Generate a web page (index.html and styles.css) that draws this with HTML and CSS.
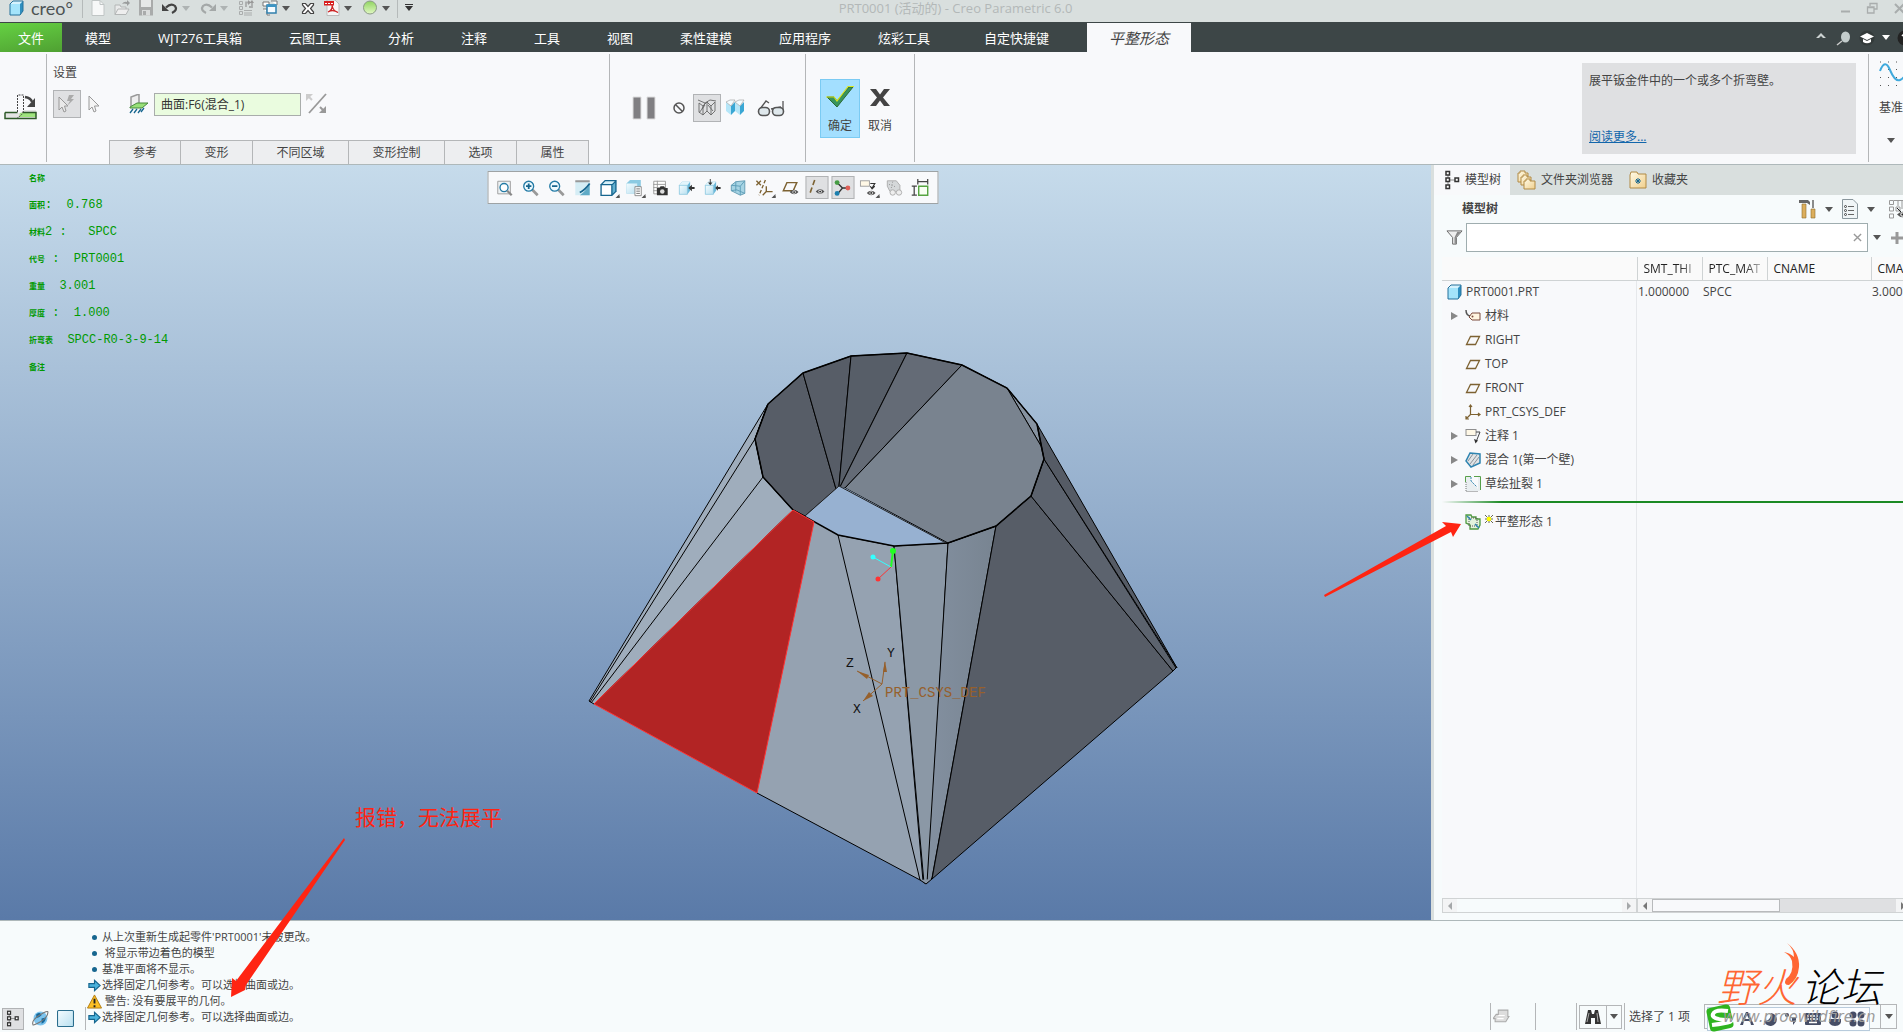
FILE: index.html
```
<!DOCTYPE html>
<html lang="zh-CN">
<head>
    <meta charset="UTF-8">
    <meta name="viewport" content="width=device-width, initial-scale=1.0">
    <title>PRT0001 (活动的) - Creo Parametric 6.0</title>
    <link rel="stylesheet" href="styles.css">
</head>
<body>
    <!-- shared icons -->
    <svg class="defs" width="0" height="0">
        <defs>
            <linearGradient id="gCube" x1="0" y1="0" x2="1" y2="1"><stop offset="0" stop-color="#f4fcff"/><stop offset="1" stop-color="#b9e0f0"/></linearGradient>
            <linearGradient id="gGreen" x1="0" y1="0" x2="0" y2="1"><stop offset="0" stop-color="#8fd45f"/><stop offset="1" stop-color="#e2f8c4"/></linearGradient>
            <linearGradient id="gGold" x1="0" y1="0" x2="1" y2="1"><stop offset="0" stop-color="#fffbe8"/><stop offset="1" stop-color="#f0cf8c"/></linearGradient>
        </defs>
        <symbol id="cube" viewBox="0 0 16 16">
            <path d="M2 4L5 1H15V11L12 15H2Z" fill="#2f8fc0"/><path d="M5 1H15L12 4H2Z" fill="#d5f2fd"/><path d="M2 4H12V15H2Z" fill="#a4e4fb"/><path d="M2 4L5 1H15V11L12 15H2Z" fill="none" stroke="#25719b"/>
        </symbol>
        <symbol id="cubelite" viewBox="0 0 20 20">
            <path d="M2 7L5 3H14V13L11 17H2Z" fill="#6db9da"/><path d="M5 3H14L11 7H2Z" fill="#e3f5fc"/><path d="M2 7H11V17H2Z" fill="url(#gCube)" stroke="#86c5de" stroke-width=".7"/>
        </symbol>
        <symbol id="eye" viewBox="0 0 10 6"><path d="M0 3Q5-2 10 3Q5 8 0 3Z" fill="#555"/><circle cx="5" cy="3" r="2" fill="#ddd"/><circle cx="5" cy="3" r="1" fill="#222"/></symbol>
        <symbol id="plane" viewBox="0 0 16 16"><path d="M5.500 4.500H14.500L10.500 12.500H1.500Z" fill="none" stroke="#7d6232" stroke-width="1.300"/></symbol>
        <symbol id="treeicon" viewBox="0 0 16 20">
            <path d="M3 5V15M5 10H11" stroke="#888" fill="none"/><g fill="#fff" stroke="#333" stroke-width="1.500"><rect x="1" y="1.500" width="3.500" height="3.500"/><rect x="1" y="8" width="3.500" height="3.500"/><rect x="1" y="15" width="3.500" height="3.500"/><rect x="10" y="8" width="3.500" height="3.500"/></g>
        </symbol>
        <symbol id="arrowmsg" viewBox="0 0 16 14"><path d="M2 5H8V1.500L14 7L8 12.500V9H2Z" fill="#4bb3dc" stroke="#17668f" stroke-width="1.200"/></symbol>
        <symbol id="note" viewBox="0 0 16 16"><rect x="1" y="1.500" width="10" height="6" fill="#fff8e6" stroke="#8f8f8f"/><path d="M11 4H15L11 14" fill="none" stroke="#444"/><path d="M9 11L10.500 15.500L13 12.500Z" fill="#333"/></symbol>
    </svg>

    <header class="titlebar">
        <svg class="applogo" viewBox="0 0 16 16"><use href="#cube"/></svg>
        <span class="brand">creo°</span>
        <div class="quick">
            <button aria-label="新建"><svg viewBox="0 0 16 16"><path d="M2 .500H10L14 4.500V15.500H2Z" fill="#f7f8f8" stroke="#c0c5c5"/><path d="M10 .500V4.500H14" fill="none" stroke="#c0c5c5"/></svg></button>
            <button aria-label="打开"><svg viewBox="0 0 16 16"><path d="M1 14.500V5H6L7 7H12V9" fill="#e9eaea" stroke="#b3b6b6"/><path d="M1 14.500L4 9H15L12 14.500Z" fill="#eee" stroke="#b3b6b6"/><path d="M8 4Q10 1 13 2V0L16 3L13 6V4Q10 3 8 4Z" fill="#9a9d9d"/></svg></button>
            <button aria-label="保存"><svg viewBox="0 0 16 16"><path d="M1 0H15V15.500H1Z" fill="#a9abab"/><path d="M3 0H13V7H3Z" fill="#e6e8e8"/><path d="M4 10H12V15.500H4Z" fill="#dadcdc"/><path d="M5 11H8V15H5Z" fill="#a9abab"/></svg></button>
            <button aria-label="撤消"><svg viewBox="0 0 16 16"><path d="M4 7.500Q9 2.500 13 6Q16 10 10 13" fill="none" stroke="#444" stroke-width="2.200"/><path d="M0 4V11H7Z" fill="#444"/></svg></button>
            <button class="drop" aria-label="撤消列表"><span class="caret pale"></span></button>
            <button aria-label="重做"><svg viewBox="0 0 16 16"><path d="M12 7.500Q7 2.500 3 6Q0 10 6 13" fill="none" stroke="#a4a8a8" stroke-width="2.200"/><path d="M16 4V11H9Z" fill="#a4a8a8"/></svg></button>
            <button class="drop" aria-label="重做列表"><span class="caret pale"></span></button>
            <button aria-label="重新生成"><svg viewBox="0 0 16 16"><g fill="none" stroke="#aaadad"><path d="M1.500 1.500H4.500V4.500H1.500ZM1.500 6.500H4.500V9.500H1.500ZM1.500 11.500H4.500V14.500H1.500ZM6 10.500H14M6 13H14M6 15H14"/><path d="M8 7V2.500H11M11 7H14V2" stroke-width="1.800"/></g><path d="M10 0L13 2.500L10 5ZM11.500 3L14 0L16 3Z" fill="#999"/></svg></button>
            <button aria-label="窗口"><svg viewBox="0 0 16 16"><path d="M1 2H7V6H1ZM9 1H15V5M1 9H5V15H8" fill="#fff" stroke="#777"/><rect x="5" y="5" width="9" height="8" fill="#f5fbff" stroke="#3180ad" stroke-width="1.500"/><path d="M5 4.500H14V7H5Z" fill="#3d95c4"/></svg></button>
            <button class="drop" aria-label="窗口列表"><span class="caret"></span></button>
            <button aria-label="关闭"><svg viewBox="0 0 16 16"><path d="M2.500 3.500H5.500L8 6.500L10.500 3.500H13.500V5L10.500 8.500L13.500 12V13.500H10.500L8 10.500L5.500 13.500H2.500V12L5.500 8.500L2.500 5Z" fill="#fff" stroke="#444" stroke-width="1.200"/></svg></button>
            <button aria-label="导出 PDF"><svg viewBox="0 0 16 16"><path d="M3 0H11L15 4V15.500H3Z" fill="#f6f6f6" stroke="#bbb"/><path d="M0 1H10V5.500H0Z" fill="#d82020"/><path d="M1 3.500H9" stroke="#fff" stroke-dasharray="2 1"/><path d="M4 12Q9 10 8 5Q9 11 14 12.500Q9 9 4 12Z" fill="none" stroke="#c22" stroke-width="1.200"/></svg></button>
            <button class="drop" aria-label="导出列表"><span class="caret"></span></button>
            <button aria-label="外观"><svg viewBox="0 0 16 16"><circle cx="8" cy="7.500" r="6.500" fill="url(#gGreen)" stroke="#8b9b86"/></svg></button>
            <button class="drop" aria-label="外观列表"><span class="caret"></span></button>
        </div>
        <button class="custom" aria-label="自定义快速访问工具栏"><span class="caret"></span></button>
        <span class="apptitle">PRT0001 (活动的) - Creo Parametric 6.0</span>
        <div class="winbtns">
            <button aria-label="最小化"><svg viewBox="0 0 12 12"><path d="M2 9.500H11" stroke="#a9adad" stroke-width="2"/></svg></button>
            <button aria-label="还原"><svg viewBox="0 0 12 12"><path d="M4 4V1.500H11V7H8M1.500 5H8V11H1.500ZM1.500 5.500H8" fill="none" stroke="#a9adad" stroke-width="1.300"/></svg></button>
            <button aria-label="关闭窗口"><svg viewBox="0 0 12 12"><path d="M2 2L11 11M11 2L2 11" stroke="#a9adad" stroke-width="2"/></svg></button>
        </div>
    </header>

    <nav class="menubar">
        <button class="file">文件</button>
        <button>模型</button>
        <button>WJT276工具箱</button>
        <button>云图工具</button>
        <button>分析</button>
        <button>注释</button>
        <button>工具</button>
        <button>视图</button>
        <button>柔性建模</button>
        <button>应用程序</button>
        <button>炫彩工具</button>
        <button class="wide">自定快捷键</button>
        <button class="active">平整形态</button>
        <div class="menutools">
            <button aria-label="最小化功能区"><svg viewBox="0 0 16 16"><path d="M3 8L8 3L13 8H10L8 6L6 8Z" fill="#ccd2d2"/></svg></button>
            <button aria-label="搜索"><svg viewBox="0 0 16 16"><path d="M1 15L6 11" stroke="#ccc" stroke-width="1.500"/><ellipse cx="9.500" cy="7" rx="4.500" ry="5.500" fill="#c3cccc"/></svg></button>
            <button aria-label="学习中心"><svg viewBox="0 0 16 16"><circle cx="8" cy="8" r="7.500" fill="#333a3a"/><path d="M1 6.500L8 3L15 6.500L8 10Z" fill="#fff"/><path d="M4 9V12Q8 14.500 12 12V9L8 11Z" fill="#fff"/></svg></button>
            <button class="slim" aria-label="学习列表"><span class="caret white"></span></button>
            <button aria-label="帮助"><svg viewBox="0 0 16 16"><circle cx="8" cy="8" r="7.500" fill="#222"/><path d="M5 6Q8 2 11 6Q10 8 8 9V11" fill="none" stroke="#fff" stroke-width="1.500"/></svg></button>
        </div>
    </nav>

    <section class="ribbon">
        <div class="flaticon">
            <svg viewBox="0 0 34 28"><path d="M2 20H15Q20 20 21 17H33V25H2Z" fill="#e4e4e4"/><path d="M17 20L22 19H33V24H16Z" fill="#9fe47d"/><path d="M2 19.500H14.500M2 19.500V25.500H33V19.500H20" fill="none" stroke="#2e5a29" stroke-width="1.500"/><path d="M14.500 19V2H20.500V17Q20 22 14 25" fill="none" stroke="#444" stroke-dasharray="2 1"/><path d="M22 4Q28 5 29 9" fill="none" stroke="#444" stroke-width="2.500"/><path d="M32 5V14H24Z" fill="#444"/></svg>
        </div>
        <div class="settings">
            <h2>设置</h2>
            <div class="setrow">
                <button class="pressed" aria-label="自动选择"><svg viewBox="0 0 24 24"><path d="M4 5V18L7 15L9 20L11 19L9.500 14H13Z" fill="#e9e9e9" stroke="#999"/><path d="M14 3L12 9H15L12 14L19 7H16L19 3Z" fill="#aaa"/></svg></button>
                <button class="plain" aria-label="手动选择"><svg viewBox="0 0 24 24"><path d="M8 4V18L11 15L13 20L15 19L13.500 14H18Z" fill="#f5f5f5" stroke="#999"/></svg></button>
                <label for="fixed" class="fixlabel" title="固定几何"><svg viewBox="0 0 20 20"><path d="M2 12V3L10 0V9" fill="#eee" stroke="#999" stroke-width="1.500"/><path d="M1 13L8 9H19L13 14H1Z" fill="#98e078" stroke="#47883b"/><path d="M4 15L1 19M8 15L5 19M12 15L9 19M15 14L12 18" stroke="#17668f" stroke-width="1.300"/></svg></label>
                <input id="fixed" type="text" value="曲面:F6(混合_1)">
                <button class="plain" aria-label="反向"><svg viewBox="0 0 24 24"><path d="M4 21L21 2" stroke="#999" stroke-width="1.800"/><path d="M1 2H8L1 9Z" fill="#ccc"/><path d="M21 14V21H14Z" fill="#999"/><path d="M3 4L7 8" stroke="#ccc" stroke-width="2"/><path d="M15 15L20 20" stroke="#999" stroke-width="2"/></svg></button>
            </div>
            <div class="slideups">
                <button>参考</button>
                <button>变形</button>
                <button class="big">不同区域</button>
                <button class="big">变形控制</button>
                <button>选项</button>
                <button>属性</button>
            </div>
        </div>
        <div class="preview">
            <button aria-label="暂停"><svg class="pause" viewBox="0 0 24 24"><path d="M1 1H9V23H1ZM15 1H23V23H15Z" fill="#807f82" stroke="#ddd"/></svg></button>
            <button aria-label="无预览"><svg class="small" viewBox="0 0 14 14"><circle cx="7" cy="7" r="5" fill="none" stroke="#555" stroke-width="1.500"/><path d="M3.500 3.500L10.500 10.500" stroke="#555" stroke-width="1.500"/></svg></button>
            <button class="pressed" aria-label="分离预览"><svg viewBox="0 0 24 24"><path d="M4 7L8 10V19L4 16ZM8 10L12 6L16 10V19L12 15L8 19M12 6V15M16 10L20 6V15L16 19M3 4L10 7L7 13M10 7L15 4L21 5M4 17L10 9M13 9L18 15" fill="none" stroke="#666" stroke-width=".900"/></svg></button>
            <button aria-label="附加预览"><svg viewBox="0 0 24 24"><path d="M3 6L8 10V19L3 15Z" fill="#b5e6f8"/><path d="M8 10L12 6V15L8 19Z" fill="#3aa7d4"/><path d="M12 6L17 10V19L12 15Z" fill="#b5e6f8"/><path d="M17 10L21 6V15L17 19Z" fill="#3aa7d4"/><path d="M3 6L7 4H12L8 10ZM12 6L16 4H21L17 10Z" fill="#f4fcff" stroke="#999" stroke-width=".600"/></svg></button>
            <button aria-label="验证"><svg class="glasses" viewBox="0 0 28 18"><path d="M3 10L9 2L12 4M14 10L24 8M26 12V2" fill="none" stroke="#555" stroke-width="1.300"/><rect x="1.500" y="8.500" width="11" height="8" rx="4" fill="#dfe8ec" stroke="#555" stroke-width="1.600"/><rect x="15.500" y="8.500" width="11" height="8" rx="4" fill="#dfe8ec" stroke="#555" stroke-width="1.600"/></svg></button>
        </div>
        <div class="confirm">
            <button class="ok"><svg viewBox="0 0 30 24"><path d="M2 12H9L12 16L24 2H28L12 22Z" fill="#37945e" stroke="#2c6a36"/><path d="M1 12H9L12 16L23 1.500H29" fill="none" stroke="#d9e61c" stroke-width="1.200"/></svg>确定</button>
            <button><svg viewBox="0 0 30 24"><path d="M5 4H11L15 9.500L19 4H25L18 12.500L25 21H19L15 15.500L11 21H5L12 12.500Z" fill="#444"/></svg>取消</button>
        </div>
        <div class="help">
            <p>展平钣金件中的一个或多个折弯壁。</p>
            <a href="#more">阅读更多...</a>
        </div>
        <div class="datum">
            <svg viewBox="0 0 36 28"><path d="M1 2H30M1 9.500H30M1 17.500H30M1 25.500H30" stroke="#555" stroke-dasharray="1 7"/><path d="M1 11Q6-2 11 10T21 20T31 6" fill="none" stroke="#3fa9dc" stroke-width="2"/></svg>
            <span>基准</span>
            <button aria-label="基准列表"><span class="caret"></span></button>
        </div>
    </section>

    <main class="work">
        <section class="viewport">
            <svg class="scene" viewBox="0 165 1431 755" preserveAspectRatio="xMidYMid slice">
                <defs>
                    <linearGradient id="bg" x1="0" y1="0" x2="0" y2="1"><stop offset="0" stop-color="#c6dbeb"/><stop offset="1" stop-color="#5a7aa8"/></linearGradient>
                    <linearGradient id="fold" x1="0" y1="0" x2="1" y2="0"><stop offset="0" stop-color="#8390a0"/><stop offset="1" stop-color="#788491"/></linearGradient>
                </defs>
                <rect y="165" width="1431" height="755" fill="url(#bg)"/>
                <!-- outer walls -->
                <g stroke="#000" stroke-linejoin="round">
                    <path d="M768 404L589 701L594 704L793 510L763 477L755 439Z" fill="#9fadbc"/>
                    <path d="M763 477L591 703M755 439L590 702M768 404L755 439" fill="none"/>
                    <path d="M814 522L757 793L920 880L838 535Z" fill="#95a2b1" stroke="none"/>
                    <path d="M757 793L920 880" fill="none"/>
                    <path d="M838 535L894 546L923 881L920 880Z" fill="#95a2b1"/>
                    <path d="M894 546L948 543L928 882L924 883Z" fill="#8b98a6"/>
                    <path d="M948 543L996 526L932 878L927 883Z" fill="url(#fold)"/>
                    <path d="M920 880L926 884L932 879" fill="#8996a5"/>
                    <path d="M996 526L1031 496L1173 671L932 879Z" fill="#575d67"/>
                    <path d="M1031 496L1044 459L1176 668L1173 671Z" fill="#5c636e"/>
                    <path d="M1044 459L1037 424L1177 668Z" fill="#555b65"/>
                    <path d="M1007 388L1037 424L1041 446Z" fill="#8793a1"/>
                </g>
                <!-- inner walls -->
                <g stroke="#000" stroke-linejoin="round">
                    <path d="M803 373L768 404L755 439L763 477L793 510L805 516L836 489Z" fill="#575d67"/>
                    <path d="M803 373L851 356L839 486L836 489Z" fill="#575d67"/>
                    <path d="M851 356L907 353L840 487L839 486Z" fill="#575e68"/>
                    <path d="M907 353L962 365L845 488L840 487Z" fill="#646b76"/>
                    <path d="M962 365L1007 388L1041 446L1044 459L1031 496L996 526L948 543L845 488Z" fill="#79838f"/>
                </g>
                <path d="M839 486L845 488L946 543L894 546L838 535L805 516Z" fill="#97b1d1"/>
                <path d="M768 404L803 373L851 356L907 353L962 365L1007 388L1037 424L1044 459L1031 496L996 526L948 543L894 546L838 535L793 510L763 477L755 439Z" fill="none" stroke="#000" stroke-width="1.500"/>
                <path d="M805 516L839 486L946 543" fill="none" stroke="#222"/>
                <path d="M793 510L814 522L757 793L594 704Z" fill="#b22424" stroke="#f33"/>
                <!-- spin centre -->
                <path d="M891 567L893 551" stroke="#2f2" stroke-width="2"/><circle cx="893" cy="551" r="3" fill="#2f2"/>
                <path d="M891 567L873 557" stroke="#3ff"/><circle cx="873" cy="557" r="2.500" fill="#3ff"/>
                <path d="M891 567L878 579" stroke="#f33"/><circle cx="878" cy="579" r="2.500" fill="#f33"/>
                <!-- coordinate system -->
                <g stroke="#96602c" fill="#96602c">
                    <path d="M882 684L885 662M882 684L857 671M882 684L863 701" fill="none"/>
                    <path d="M885 661L887 672H883ZM857 671L869 675L867 679ZM863 701L869 692L873 696Z" stroke="none"/>
                </g>
                <text class="csys" x="885" y="697">PRT_CSYS_DEF</text>
                <text class="axis" x="887" y="657">Y</text>
                <text class="axis" x="846" y="667">Z</text>
                <text class="axis" x="853" y="713">X</text>
            </svg>
            <ul class="params">
                <li><b>名称</b></li>
                <li><b>面积</b>:  0.768</li>
                <li><b>材料</b>2 :   SPCC</li>
                <li><b>代号</b> :  PRT0001</li>
                <li><b>重量</b>  3.001</li>
                <li><b>厚度</b> :  1.000</li>
                <li><b>折弯表</b>  SPCC-R0-3-9-14</li>
                <li><b>备注</b></li>
            </ul>
            <div class="viewtools">
                <button aria-label="重新调整"><svg viewBox="0 0 20 20"><path d="M2.500 2.500H16.500V16.500H2.500Z" fill="#eef3f5" stroke="#999"/><circle cx="9.500" cy="9.500" r="4.500" fill="#fff" stroke="#247ba6" stroke-width="1.500"/><path d="M13 13L18 18" stroke="#888" stroke-width="2.500"/></svg></button>
                <button aria-label="放大"><svg viewBox="0 0 20 20"><path d="M12 12L18 18" stroke="#999" stroke-width="3"/><circle cx="8" cy="8" r="5.500" fill="#eefaff" stroke="#247ba6" stroke-width="1.500"/><path d="M5 8H11M8 5V11" stroke="#17668f" stroke-width="2"/></svg></button>
                <button aria-label="缩小"><svg viewBox="0 0 20 20"><path d="M12 12L18 18" stroke="#999" stroke-width="3"/><circle cx="8" cy="8" r="5.500" fill="#eefaff" stroke="#247ba6" stroke-width="1.500"/><path d="M5 8H11" stroke="#17668f" stroke-width="2"/></svg></button>
                <button aria-label="重画"><svg viewBox="0 0 20 20"><path d="M2 2H18V18H2Z" fill="#d5edf5"/><path d="M18 6V18H7Q13 14 18 6Z" fill="#5faac6"/><path d="M7 15Q13 12 18 5" stroke="#17668f" stroke-width="2" fill="none"/><path d="M2 2.500H18" stroke="#999" stroke-width="2"/></svg></button>
                <button class="more" aria-label="显示样式"><svg viewBox="0 0 20 20"><path d="M1 6L6 1H19V14L14 19H1Z" fill="#17668f"/><path d="M2.500 7H13V17.500H2.500Z" fill="#fff"/><path d="M3.500 5.500L6.500 2.500H17L14 5.500Z" fill="#d7f0f9"/><path d="M14.500 7L17.500 4V13.500L14.500 16.500Z" fill="#63b0cf"/></svg></button>
                <button class="more" aria-label="已保存方向"><svg viewBox="0 0 20 20"><path d="M1 5L5 1H17V12L13 16H1Z" fill="#8bcae2"/><path d="M1 5H13V16H1Z" fill="url(#gCube)"/><path d="M10.500 8.500H17.500V18.500H10.500Z" fill="#fff" stroke="#888"/><path d="M12 11H16M12 13.500H16M12 16H16" stroke="#666"/></svg></button>
                <button aria-label="视图管理器"><svg viewBox="0 0 20 20"><path d="M2.500 2.500H15.500V16.500H2.500ZM6.500 2V16M2 6H16M2 9.500H16M2 13H16" fill="#fff" stroke="#999"/><path d="M6 10H9L10 8H14L15 10H18V18H6Z" fill="#333"/><circle cx="12" cy="14" r="2.500" fill="#ddd"/></svg></button>
                <button aria-label="从右侧查看"><svg viewBox="0 0 20 20"><use href="#cubelite"/><path d="M12 10L16 6.500V9H19V11H16V13.500Z" fill="#333"/></svg></button>
                <button aria-label="从两侧查看"><svg viewBox="0 0 20 20"><use href="#cubelite"/><path d="M13 10L16 7V9H19V11H16V13ZM7.500 7L5 4H7V0H8V4H10Z" fill="#333"/></svg></button>
                <button aria-label="透视图"><svg viewBox="0 0 20 20"><path d="M2 7L7 3L17 2V16L12 18L2 13Z" fill="#a7d4e4" stroke="#6099b0"/><path d="M2 7L12 8L17 2M12 8V18M7 3V14M2 13L8 12L17 16" fill="none" stroke="#5b9cb7"/></svg></button>
                <button class="more" aria-label="基准显示过滤器"><svg viewBox="0 0 20 20"><g fill="none" stroke="#7d6232" stroke-width="1.500"><path d="M1 2L6 7M6 2L1 7"/><path d="M11 1L4 18" stroke-dasharray="4 2"/><path d="M12 8V14H19M12 14L8 18"/></g></svg></button>
                <button aria-label="平面显示"><svg viewBox="0 0 20 20"><path d="M6 4H17L13 13H2Z" fill="none" stroke="#7d6232" stroke-width="1.600"/><use href="#eye" x="9" y="11" width="10" height="7"/></svg></button>
                <button class="on" aria-label="轴显示"><svg viewBox="0 0 20 20"><path d="M8 1L2 18" stroke="#7d6232" stroke-width="1.800" stroke-dasharray="6 3"/><use href="#eye" x="9" y="10" width="10" height="8"/></svg></button>
                <button class="on" aria-label="旋转中心"><svg viewBox="0 0 20 20"><path d="M5 5L10 10H16M10 10L5 16" fill="none" stroke="#333" stroke-width="1.500"/><circle cx="4" cy="4" r="2.700" fill="#469c43"/><circle cx="16" cy="10" r="2.700" fill="#e06058"/><circle cx="4" cy="16" r="2.700" fill="#1c7fae"/></svg></button>
                <button class="more" aria-label="注释显示"><svg viewBox="0 0 20 20"><rect x="1" y="2" width="10" height="6" fill="#fff8e6" stroke="#999"/><path d="M12 5H17L14 10M12 8L14 11L17 8" fill="none" stroke="#333" stroke-width="1.300"/><use href="#eye" x="8" y="12" width="10" height="7"/></svg></button>
                <button aria-label="模拟显示"><svg viewBox="0 0 20 20"><path d="M2 2H12L16 7V14H5L2 8Z" fill="#d5d8da" stroke="#aaa"/><path d="M4 6L12 9M8 3L6 12" stroke="#888" stroke-dasharray="1 2"/><circle cx="8" cy="15" r="3" fill="#eee" stroke="#aaa"/><circle cx="15" cy="15" r="3" fill="#eee" stroke="#aaa"/></svg></button>
                <button aria-label="尺寸显示"><svg viewBox="0 0 20 20"><path d="M7 3H18M7 0V6M18 0V6M3 8V18M0 8H6M0 18H6" stroke="#444" stroke-width="1.400"/><path d="M8 8H18V18H8Z" fill="#f7fff2" stroke="#56a441" stroke-width="1.600"/></svg></button>
            </div>
        </section>

        <aside class="navigator">
            <div class="navtabs">
                <button class="current"><svg class="tall" viewBox="0 0 16 20"><use href="#treeicon"/></svg>模型树</button>
                <button><svg viewBox="0 0 20 20"><g fill="url(#gGold)" stroke="#b18a45"><path d="M1 3H3V1H8V3H11V12H1Z"/><path d="M4 7H6V5H10V7H14V15H4Z"/><path d="M7 11H9V9H13V11H18V19H7Z"/></g></svg>文件夹浏览器</button>
                <button><svg viewBox="0 0 20 20"><path d="M2 5L3 2H9L10 4H18V18H2Z" fill="url(#gGold)" stroke="#b18a45"/><path d="M10 8V14M7 11H13M8 9L12 13M12 9L8 13" stroke="#17668f"/></svg>收藏夹</button>
            </div>
            <div class="navhead">
                <h2>模型树</h2>
                <button aria-label="设置"><svg viewBox="0 0 20 20"><path d="M1 1H10L12 3V6L9 4H1Z" fill="#666"/><path d="M4 5H8V19H4Z" fill="#dcae5c" stroke="#8f6b2d" stroke-width=".600"/><path d="M15 1V9" stroke="#666" stroke-width="1.500"/><path d="M13 10H17V19H13Z" fill="#dcae5c" stroke="#8f6b2d" stroke-width=".600"/></svg></button>
                <button class="slim" aria-label="设置列表"><span class="caret"></span></button>
                <button aria-label="显示"><svg viewBox="0 0 20 20"><path d="M2.500 .500H13L17.500 5V19.500H2.500Z" fill="#f0f5f7" stroke="#8a979d"/><path d="M8 7.500H14M8 11.500H14M8 15.500H14" stroke="#666"/><g fill="none" stroke="#444"><circle cx="5.500" cy="7.500" r="1"/><circle cx="5.500" cy="11.500" r="1"/><circle cx="5.500" cy="15.500" r="1"/></g></svg></button>
                <button class="slim" aria-label="显示列表"><span class="caret"></span></button>
                <button class="treefilter" aria-label="树过滤器"><svg viewBox="0 0 20 20"><path d="M1.500 1.500H5.500V5.500H1.500ZM1.500 8H5.500V12H1.500ZM1.500 15H5.500V19H1.500ZM8 8H12V12H8ZM6 1.500H18M10 2V7M14 2V10" fill="none" stroke="#999"/><path d="M9 9L18 18" stroke="#222"/><use href="#eye" x="9" y="12" width="11" height="7"/></svg></button>
            </div>
            <div class="filter">
                <label for="treefilter" title="过滤"><svg viewBox="0 0 18 18"><path d="M1 2H17L11 9V16H7V9Z" fill="#eee" stroke="#666"/><path d="M12 3H15.500L10.500 9V15.500H9V9Z" fill="#888"/></svg></label>
                <div class="filterbox">
                    <input id="treefilter" type="text">
                    <button aria-label="清除"><svg viewBox="0 0 10 10"><path d="M1 1L9 9M9 1L1 9" stroke="#999" stroke-width="1.500"/></svg></button>
                </div>
                <button class="slim" aria-label="过滤列表"><span class="caret"></span></button>
                <button class="add" aria-label="添加"><svg viewBox="0 0 12 12"><path d="M0 6H12M6 0V12" stroke="#999" stroke-width="3"/></svg></button>
            </div>
            <div class="treearea">
                <table>
                    <thead>
                        <tr><th class="c-name" aria-label="名称"></th><th class="c-val"><span>SMT_THI</span></th><th class="c-val"><span>PTC_MAT</span></th><th class="c-wide">CNAME</th><th class="c-wide">CMASS</th></tr>
                    </thead>
                    <tbody>
                        <tr><td><div class="node root"><svg viewBox="0 0 16 16"><use href="#cube"/></svg>PRT0001.PRT</div></td><td>1.000000</td><td>SPCC</td><td></td><td>3.000</td></tr>
                        <tr><td><div class="node"><i class="toggle"></i><svg viewBox="0 0 16 16"><path d="M1 2Q1 8 6 8" fill="none" stroke="#555" stroke-width="1.500"/><path d="M4 9L7 5H15V12H7Z" fill="#fff5e0" stroke="#7b4a3c"/><circle cx="7.500" cy="8.500" r="1" fill="#7b4a3c"/></svg>材料</div></td></tr>
                        <tr><td><div class="node"><i></i><svg viewBox="0 0 16 16"><use href="#plane"/></svg>RIGHT</div></td></tr>
                        <tr><td><div class="node"><i></i><svg viewBox="0 0 16 16"><use href="#plane"/></svg>TOP</div></td></tr>
                        <tr><td><div class="node"><i></i><svg viewBox="0 0 16 16"><use href="#plane"/></svg>FRONT</div></td></tr>
                        <tr><td><div class="node"><i></i><svg viewBox="0 0 16 16"><path d="M5.500 1V10.500H15M5.500 10.500L1 15M4 3L5.500 1L7 3M13 9L15 10.500L13 12M1 12V15H4" fill="none" stroke="#7d6232" stroke-width="1.200"/></svg>PRT_CSYS_DEF</div></td></tr>
                        <tr><td><div class="node"><i class="toggle"></i><svg viewBox="0 0 16 16"><use href="#note"/></svg>注释 1</div></td></tr>
                        <tr><td><div class="node"><i class="toggle"></i><svg viewBox="0 0 16 16"><path d="M5 1L15 2V11L6 15L1 9Z" fill="#dfe3e6" stroke="#2f84b0" stroke-width="1.500"/><path d="M3 9L8 2M5 12L12 3M8 13L14 5" stroke="#8b9298"/></svg>混合 1(第一个壁)</div></td></tr>
                        <tr><td><div class="node"><i class="toggle"></i><svg viewBox="0 0 16 16"><path d="M1 1H5L8 7L13 13V1H15V15H1Z" fill="#e9eef0"/><path d="M.500 6V.500H6M9 .500H15.500V14" fill="none" stroke="#58a04a"/><path d="M1 6V15.500H13" fill="none" stroke="#777" stroke-dasharray="1 1"/><path d="M6 1V5L12 11" fill="none" stroke="#2f84b0" stroke-dasharray="2 1"/></svg>草绘扯裂 1</div></td></tr>
                        <tr class="insert"><td colspan="5"></td></tr>
                        <tr><td><div class="node fresh"><i></i><svg viewBox="0 0 16 16"><path d="M1 1H6L7 3H11V5H15V11L13 15H5V11L1 9Z" fill="#e3f3dd" stroke="#4f9a40" stroke-width="1.300"/><path d="M4 4H12V12H4Z" fill="none" stroke="#555" stroke-dasharray="1 1"/><path d="M2 2L6 6M10 10L14 14" stroke="#2f84b0" stroke-width="1.500"/></svg><svg class="star" viewBox="0 0 8 8"><path d="M0 0L8 8M8 0L0 8M4 0V8M0 4H8" stroke="#665" stroke-width="1"/><circle cx="4" cy="4" r="2.300" fill="#ff0"/></svg>平整形态 1</div></td></tr>
                    </tbody>
                </table>
            </div>
            <div class="scrolls">
                <div class="sbar first"><span class="prev"></span><span class="track"></span><span class="next"></span></div>
                <div class="sbar"><span class="prev dark"></span><span class="thumb"></span><span class="rest"></span><span class="next dark"></span></div>
            </div>
        </aside>
    </main>

    <footer class="status">
        <div class="toggles">
            <button class="pressed" aria-label="模型树"><svg viewBox="0 0 16 20"><use href="#treeicon"/></svg></button>
            <button aria-label="浏览器"><svg viewBox="0 0 16 16"><circle cx="8" cy="8" r="6.500" fill="#7cc4ee"/><path d="M4 4Q8 1 9 5Q6 8 4 7ZM9 8L13 7Q13 11 9 13Z" fill="#14699c"/><path d="M1 14Q-1 10 7 5T15 2Q15 7 8 11T1 14Z" fill="none" stroke="#777"/></svg></button>
            <button aria-label="全屏"><svg viewBox="0 0 16 16"><rect x=".500" y=".500" width="15" height="15" rx="1" fill="url(#gCube)" stroke="#2a6d8d"/></svg></button>
        </div>
        <ul class="log">
            <li><span class="dot"></span>从上次重新生成起零件'PRT0001'未被更改。</li>
            <li><span class="dot"></span>&nbsp;将显示带边着色的模型</li>
            <li><span class="dot"></span>基准平面将不显示。</li>
            <li><svg viewBox="0 0 16 14"><use href="#arrowmsg"/></svg>选择固定几何参考。可以选择曲面或边。</li>
            <li><svg viewBox="0 0 16 16"><path d="M8 1L15.500 15H.500Z" fill="#fcbf24" stroke="#b07b10"/><path d="M8 5V10M8 12V14" stroke="#222" stroke-width="2"/></svg>&nbsp;警告: 没有要展平的几何。</li>
            <li><svg viewBox="0 0 16 14"><use href="#arrowmsg"/></svg>选择固定几何参考。可以选择曲面或边。</li>
        </ul>
        <div class="selection">
            <div class="cell regen"><svg viewBox="0 0 16 16"><path d="M5 2H14V8H15L12 13H2V10H0L3 6H5Z" fill="#ddd" stroke="#aaa"/><path d="M5 7H11M4 10H10" stroke="#fff"/></svg></div>
            <div class="cell empty"></div>
            <div class="cell find">
                <button aria-label="查找"><svg viewBox="0 0 18 16"><path d="M4 1H7L8 5H10L11 1H14L17 15H11V9H7V15H1Z" fill="#333"/><path d="M5 4L3 13M13 4L14 13" stroke="#aaa"/></svg></button>
                <button class="slim" aria-label="查找列表"><span class="caret"></span></button>
            </div>
            <div class="cell picked">选择了 1 项</div>
            <div class="picker">
                <select aria-label="选择过滤器"><option></option></select>
                <button class="slim" aria-label="过滤器列表"><span class="caret"></span></button>
            </div>
        </div>
    </footer>

    <!-- input method bar, floats above the status bar -->
    <div class="ime">
        <svg viewBox="0 0 18 18"><path d="M2 15L8 2H10L16 15H13L12 11H6L5 15ZM7 9H11L9 5Z" fill="#454d66" fill-rule="evenodd"/></svg>
        <svg viewBox="0 0 18 18"><path d="M11 3A6.500 6.500 0 1 1 4 11Q11 11 11 3Z" fill="#454d66"/></svg>
        <svg viewBox="0 0 18 18"><circle cx="5" cy="5" r="2" fill="#454d66"/><path d="M10 7H14V11L11 15V11H10Z" fill="#454d66"/></svg>
        <svg viewBox="0 0 18 18"><rect x="1" y="3" width="16" height="12" rx="1" fill="#454d66"/><path d="M3 6H15M3 9H15" stroke="#fff" stroke-width="1.500" stroke-dasharray="2 1"/><path d="M5 12.500H13" stroke="#fff" stroke-width="1.500"/></svg>
        <svg viewBox="0 0 18 18"><circle cx="9" cy="5" r="3.500" fill="#454d66"/><path d="M3 9H15Q16 16 9 16T3 9Z" fill="#454d66"/></svg>
        <svg viewBox="0 0 18 18"><g fill="#454d66"><circle cx="5" cy="5" r="3.500"/><circle cx="13" cy="5" r="3.500"/><circle cx="5" cy="13" r="3.500"/><circle cx="13" cy="13" r="3.500"/></g></svg>
    </div>
    <svg class="sogou" viewBox="0 0 28 28"><rect x="2" y="2" width="24" height="24" rx="4" fill="#2fb41f" transform="rotate(-12 14 14)"/><path d="M22 7Q9 5 7 10T20 16T6 21" fill="none" stroke="#fff" stroke-width="4"/></svg>
    <div class="watermark">
        <div class="wmname"><em>野火</em><i>论坛</i></div>
        <div class="wmurl">www.proewildfire.cn</div>
        <svg viewBox="0 0 20 44"><path d="M4 0Q17 10 16 24Q15 36 6 42Q0 42 3 36Q11 30 9 18Q7 12 1 9Q7 10 11 14Q11 6 4 0Z" fill="#ff6633"/></svg>
    </div>

    <!-- red mark-up -->
    <svg class="marks" viewBox="0 0 1903 1032" preserveAspectRatio="none">
        <path d="M344 838L345 840L246 985L245 990L231 997L232 978L236 981Z" fill="#ff2412"/>
        <path d="M1324 595L1446 526L1442 522L1461 524L1453 537L1451 532L1325 597Z" fill="#ff2412"/>
    </svg>
    <div class="markup">报错，无法展平</div>
</body>
</html>
```
FILE: styles.css
```
* {
    box-sizing: border-box;
}
html, body {
    height: 100%;
}
body {
    margin: 0;
    display: flex;
    flex-direction: column;
    position: relative;
    overflow: hidden;
    font-family: "Open Sans", "Noto Sans CJK SC", sans-serif;
    font-size: 12px;
    line-height: 16px;
    color: #444;
    background: #f7fbfc;
}
button {
    display: flex;
    align-items: center;
    justify-content: center;
    margin: 0;
    padding: 0;
    border: 0;
    background: none;
    font: inherit;
    color: inherit;
    white-space: nowrap;
    flex: none;
}
svg {
    display: block;
    flex: none;
}
h2, p, ul {
    margin: 0;
    padding: 0;
    font-size: 12px;
    font-weight: normal;
    list-style: none;
}
.defs {
    position: absolute;
}
.caret {
    border: 4px solid transparent;
    border-top: 5px solid #555;
    border-bottom: 0;
}
.caret.pale {
    border-top-color: #aeb3b3;
}
.caret.white {
    border-top-color: #fff;
}

/* title bar */
.titlebar {
    display: flex;
    align-items: center;
    height: 22px;
    padding-bottom: 6px;
    background: #d9dfde;
    flex: none;
    position: relative;
}
.applogo {
    width: 16px;
    height: 16px;
    margin: 0 7px 0 8px;
}
.brand {
    width: 51px;
    font-family: Lato, sans-serif;
    font-size: 18px;
    line-height: 16px;
    color: #4d5354;
}
.quick {
    display: flex;
    border-left: 1px solid #b5baba;
    border-right: 1px solid #b5baba;
    padding: 0 1px 0 3px;
}
.quick button {
    width: 24px;
    height: 20px;
}
.quick .drop {
    width: 14px;
    justify-content: flex-start;
}
.quick svg {
    width: 16px;
    height: 16px;
}
.custom {
    width: 22px;
}
.custom .caret {
    border-top-color: #333;
}
.custom::before {
    content: "";
    width: 8px;
    height: 1px;
    background: #333;
    margin: 0 -8px 8px 0;
}
.apptitle {
    position: absolute;
    left: 0;
    right: 0;
    text-align: center;
    font-size: 13px;
    padding-left: 8px;
    color: #b3b8b8;
    pointer-events: none;
}
.winbtns {
    display: flex;
    gap: 15px;
    margin-left: auto;
    margin-right: -2px;
}
.winbtns svg {
    width: 12px;
    height: 12px;
}

/* menu tabs */
.menubar {
    display: flex;
    height: 30px;
    padding-top: 1px;
    background: #3d4647;
    color: #fff;
    font-size: 13px;
    flex: none;
}
.menubar > button {
    padding: 0 24px 0 23px;
}
.menubar > .file {
    width: 62px;
    padding: 0;
    background: linear-gradient(170deg, #65d143, #4fa032);
}
.menubar > .wide {
    padding: 0 38px 0 30px;
}
.menubar > .active {
    width: 104px;
    padding: 0;
    background: #f8f9fb;
    color: #444;
    font-style: italic;
    font-size: 15px;
}
.menutools {
    display: flex;
    align-items: center;
    gap: 7px;
    margin-left: auto;
    margin-right: -10px;
}
.menutools svg {
    width: 16px;
    height: 16px;
}

/* ribbon */
.ribbon {
    display: flex;
    height: 113px;
    background: #f8f9fb;
    border-bottom: 1px solid #aeb8ba;
    flex: none;
    overflow: hidden;
}
.ribbon > div {
    border-right: 1px solid #b4b6b8;
    margin: 2px 0;
}
.ribbon .flaticon {
    width: 47px;
    padding: 39px 0 0 3px;
}
.flaticon svg {
    width: 34px;
    height: 28px;
}
.ribbon .settings {
    width: 563px;
    padding-left: 6px;
    margin-bottom: 0;
    display: flex;
    flex-direction: column;
}
.settings h2 {
    padding-top: 11px;
}
.setrow {
    display: flex;
    align-items: center;
    height: 28px;
    margin-top: 9px;
}
.setrow svg {
    width: 24px;
    height: 24px;
}
.pressed {
    width: 28px;
    height: 28px;
    border: 1px solid #b1b3b5;
    background: #dfe0e2;
}
.fixlabel {
    margin-left: 24px;
}
.setrow .fixlabel svg {
    width: 20px;
    height: 20px;
}
.setrow input {
    width: 147px;
    height: 23px;
    margin: 0 4px 0 5px;
    padding: 0 6px;
    border: 1px solid #a9adab;
    background: #eafcdf;
    font: inherit;
    color: #333;
}
.slideups {
    display: flex;
    margin: auto 0 0 56px;
}
.slideups button {
    width: 72px;
    height: 24px;
    border: 1px solid #b4b6b8;
    border-left-width: 0;
    border-bottom: 0;
    background: #edeef0;
}
.slideups button:first-child {
    border-left-width: 1px;
}
.slideups .big {
    width: 96px;
}
.ribbon .preview {
    display: flex;
    align-items: center;
    width: 196px;
    padding: 0 0 1px 22px;
}
.preview svg {
    width: 24px;
    height: 24px;
}
.preview .small {
    width: 14px;
    height: 14px;
    margin: 0 7px 0 16px;
}
.preview .pressed + button {
    margin: 0 10px 0 2px;
}
.preview .glasses {
    width: 28px;
    height: 18px;
}
.ribbon .confirm {
    display: flex;
    width: 109px;
    padding: 25px 0 0 14px;
}
.confirm button {
    flex-direction: column;
    width: 40px;
    height: 59px;
    gap: 9px;
    padding-top: 2px;
    border: 1px solid transparent;
}
.confirm svg {
    width: 30px;
    height: 24px;
}
.confirm .ok {
    background: #a3dfff;
    border-color: #7bcbf3;
}
.ribbon .help {
    width: 274px;
    height: 91px;
    margin: 11px 12px 0 auto;
    padding: 10px 7px;
    border: 0;
    background: #dfe0e2;
}
.help a {
    display: inline-block;
    margin-top: 40px;
    color: #1266ab;
    text-decoration: underline;
}
.ribbon .datum {
    width: 35px;
    border-right: 0;
    border-left: 1px solid #b4b6b8;
    padding: 6px 0 0 10px;
    white-space: nowrap;
}
.datum svg {
    width: 36px;
    height: 28px;
    margin-bottom: 12px;
}
.datum button {
    margin: 22px 0 0 8px;
}

/* graphics window */
.work {
    display: flex;
    flex: 1;
    min-height: 0;
}
.viewport {
    position: relative;
    flex: 1;
    min-width: 0;
    overflow: hidden;
    background: #8fabca;
}
.scene {
    position: absolute;
    width: 100%;
    height: 100%;
}
.csys, .axis {
    font-family: "Liberation Mono", monospace;
    font-size: 14px;
    fill: #96602c;
}
.axis {
    font-size: 13px;
    fill: #111;
}
.params {
    position: absolute;
    left: 29px;
    top: 0;
    font-family: "Liberation Mono", "Noto Sans CJK SC", monospace;
    font-size: 12px;
    color: #009a00;
}
.params li {
    height: 27px;
    line-height: 27px;
    white-space: pre;
}
.params b {
    font-size: 8px;
}
.viewtools {
    position: absolute;
    top: 6px;
    left: 50%;
    transform: translateX(-50%);
    display: flex;
    gap: 3px;
    padding: 4px 5px;
    margin-left: -3px;
    background: #f8f9fb;
    border: 1px solid #9ea3a5;
}
.viewtools button {
    position: relative;
    width: 23px;
    height: 23px;
    border: 1px solid transparent;
}
.viewtools svg {
    width: 18px;
    height: 18px;
}
.viewtools .on {
    background: #dfe0e2;
    border-color: #b1b3b5;
}
.viewtools .more::after {
    content: "";
    position: absolute;
    right: 0;
    bottom: 0;
    border: 2px solid #555;
    border-top-color: transparent;
    border-left-color: transparent;
}

/* navigator */
.navigator {
    display: flex;
    flex-direction: column;
    width: 472px;
    border-left: 3px solid #d9dfde;
    background: #f7fbfc;
    overflow: hidden;
}
.navtabs {
    display: flex;
    height: 30px;
    background: #d9dfde;
}
.navtabs button {
    gap: 4px;
    padding: 0 8px 0 7px;
}
.navtabs svg {
    width: 20px;
    height: 20px;
}
.navtabs .tall {
    width: 16px;
}
.navtabs .current {
    width: 76px;
    padding-left: 10px;
    background: #f8f9fb;
}
.navhead {
    display: flex;
    align-items: center;
    height: 28px;
    padding-left: 28px;
    margin-right: -5px;
}
.navhead h2 {
    margin-right: auto;
    font-weight: bold;
}
.navhead svg {
    width: 20px;
    height: 20px;
}
.navhead .slim {
    width: 22px;
}
.navhead .treefilter {
    margin-left: 6px;
}
.filter {
    display: flex;
    align-items: center;
    padding-left: 12px;
    margin-right: -5px;
}
.filter label {
    width: 20px;
}
.filter label svg {
    width: 17px;
    height: 17px;
}
.filterbox {
    display: flex;
    flex: 1;
    height: 29px;
    border: 1px solid #9fadaf;
    background: #fff;
}
.filterbox input {
    flex: 1;
    min-width: 0;
    border: 0;
    background: none;
    font: inherit;
}
.filterbox button {
    width: 20px;
}
.filterbox svg {
    width: 9px;
    height: 9px;
}
.filter .slim {
    width: 18px;
}
.add {
    width: 22px;
}
.add svg {
    width: 12px;
    height: 12px;
}
.treearea {
    flex: 1;
    min-height: 0;
    margin: 5px 0 0 8px;
    overflow: hidden;
    background: linear-gradient(to right, transparent 194px, #e6e8eb 194px, #e6e8eb 195px, transparent 195px) #f8f9fb;
}
table {
    width: 533px;
    table-layout: fixed;
    border-collapse: collapse;
}
th, td {
    height: 24px;
    padding: 0 1px;
    text-align: left;
    font-weight: normal;
    white-space: nowrap;
}
th {
    height: 23px;
    padding: 2px 4px 0 6px;
    border-right: 1px solid #cfd3d4;
    border-bottom: 1px solid #cfd3d4;
    color: #222;
    background: #fafafa;
}
/* long column names fade out at the right */
th span {
    background: linear-gradient(to right, #222 36px, #ccc 54px);
    background-clip: text;
    color: transparent;
}
.c-name {
    width: 195px;
}
.c-val {
    width: 65px;
}
.c-wide {
    width: 104px;
}
.node {
    display: flex;
    align-items: center;
    gap: 4px;
    padding-left: 6px;
}
.node.root {
    padding-left: 3px;
}
.node svg {
    width: 16px;
    height: 16px;
}
.node i {
    width: 12px;
}
.node .toggle::before {
    content: "";
    display: block;
    width: 0;
    margin-left: 2px;
    border: 4px solid transparent;
    border-left: 7px solid #888;
    border-right: 0;
}
.node .star {
    width: 8px;
    height: 8px;
    margin: 0 -2px 6px 0;
}
.insert td {
    height: 14px;
    background: linear-gradient(to right, transparent, #1b8a24 60px) 0 5px / 100% 2px no-repeat;
}
.scrolls {
    display: flex;
    height: 22px;
    padding: 0 0 7px 8px;
    margin-right: -8px;
}
.sbar {
    display: flex;
    flex: 1;
    border: 1px solid #d0d3d4;
    background: #dfe0e2;
}
.sbar.first {
    flex: none;
    width: 195px;
    background: #f7fbfc;
}
.sbar span {
    display: flex;
    align-items: center;
    justify-content: center;
    width: 14px;
    background: #f3f4f5;
}
.prev::before, .next::before {
    content: "";
    border: 4px solid transparent;
    border-left-width: 0;
    border-right-color: #a5a8aa;
}
.next::before {
    border-width: 4px 0 4px 4px;
    border-left-color: #a5a8aa;
}
.prev.dark::before {
    border-right-color: #777;
}
.next.dark::before {
    border-left-color: #777;
}
.sbar .track, .sbar .rest {
    flex: 1;
    background: none;
}
.sbar .thumb {
    width: 128px;
    background: #f8f9fb;
    border: 1px solid #b8babc;
}

/* status area */
.status {
    display: flex;
    align-items: flex-end;
    border-top: 1px solid #aeb8ba;
    background: #f7fbfc;
    flex: none;
}
.toggles {
    display: flex;
    align-items: center;
    gap: 8px;
    height: 23px;
    width: 86px;
    margin-bottom: 2px;
    padding-left: 2px;
    border-right: 1px solid #b4b6b8;
}
.toggles svg {
    width: 17px;
    height: 17px;
}
.toggles .pressed {
    width: 22px;
    height: 22px;
}
.log {
    padding: 8px 0 7px;
}
.log li {
    display: flex;
    align-items: center;
    height: 16px;
    font-size: 11px;
}
.log svg {
    width: 15px;
    height: 15px;
    margin: 0 0 0 1px;
}
.log .dot {
    width: 5px;
    height: 5px;
    margin: 0 5px 0 6px;
    border-radius: 50%;
    background: #17668f;
}
.selection {
    display: flex;
    align-items: center;
    height: 27px;
    margin: 0 6px 2px auto;
}
.cell {
    display: flex;
    align-items: center;
    height: 27px;
    padding: 0 2px;
    border-left: 1px solid #b4b6b8;
}
.cell.regen {
    width: 45px;
}
.cell.empty {
    width: 41px;
}
.regen svg {
    width: 17px;
    height: 17px;
}
.find button {
    width: 28px;
    height: 24px;
    border: 1px solid #b4b6b8;
}
.find .slim {
    width: 15px;
    border-left: 0;
}
.find svg {
    width: 18px;
    height: 16px;
}
.cell.picked {
    width: 80px;
    padding-left: 4px;
    font-size: 12px;
    white-space: nowrap;
}
.picker {
    display: flex;
    width: 193px;
    height: 25px;
    border: 1px solid #b4b6b8;
}
.picker select {
    flex: 1;
    appearance: none;
    border: 0;
    border-right: 1px solid #b4b6b8;
    background: none;
}
.picker .slim {
    width: 15px;
}
.ime {
    position: absolute;
    right: 33px;
    bottom: 1px;
    display: flex;
    align-items: center;
    gap: 4px;
    width: 163px;
    height: 24px;
    padding-left: 30px;
    border: 1px solid #b8cbdc;
    background: #fbfdff;
}
.ime svg {
    width: 18px;
    height: 18px;
}
.sogou {
    position: absolute;
    right: 169px;
    bottom: 0;
    width: 28px;
    height: 28px;
}
.watermark {
    position: absolute;
    right: 16px;
    bottom: 5px;
    width: 170px;
    white-space: nowrap;
    pointer-events: none;
}
.wmname {
    display: flex;
    gap: 4px;
    font-weight: 300;
    font-family: "Noto Sans CJK SC", sans-serif;
    font-size: 40px;
    line-height: 44px;
    color: #000;
}
.wmname em {
    color: #ff6633;
}
.wmurl {
    padding-left: 6px;
    font-family: "DejaVu Sans", sans-serif;
    font-size: 15px;
    font-style: italic;
    line-height: 20px;
    color: #9b9b9b;
}
.watermark svg {
    position: absolute;
    left: 66px;
    top: -20px;
    width: 20px;
    height: 44px;
}
.marks {
    position: absolute;
    left: 0;
    top: 0;
    width: 100%;
    height: 100%;
    pointer-events: none;
}
.markup {
    position: absolute;
    left: 355px;
    bottom: 200px;
    font-size: 21px;
    line-height: 30px;
    color: #ff2412;
}
```
